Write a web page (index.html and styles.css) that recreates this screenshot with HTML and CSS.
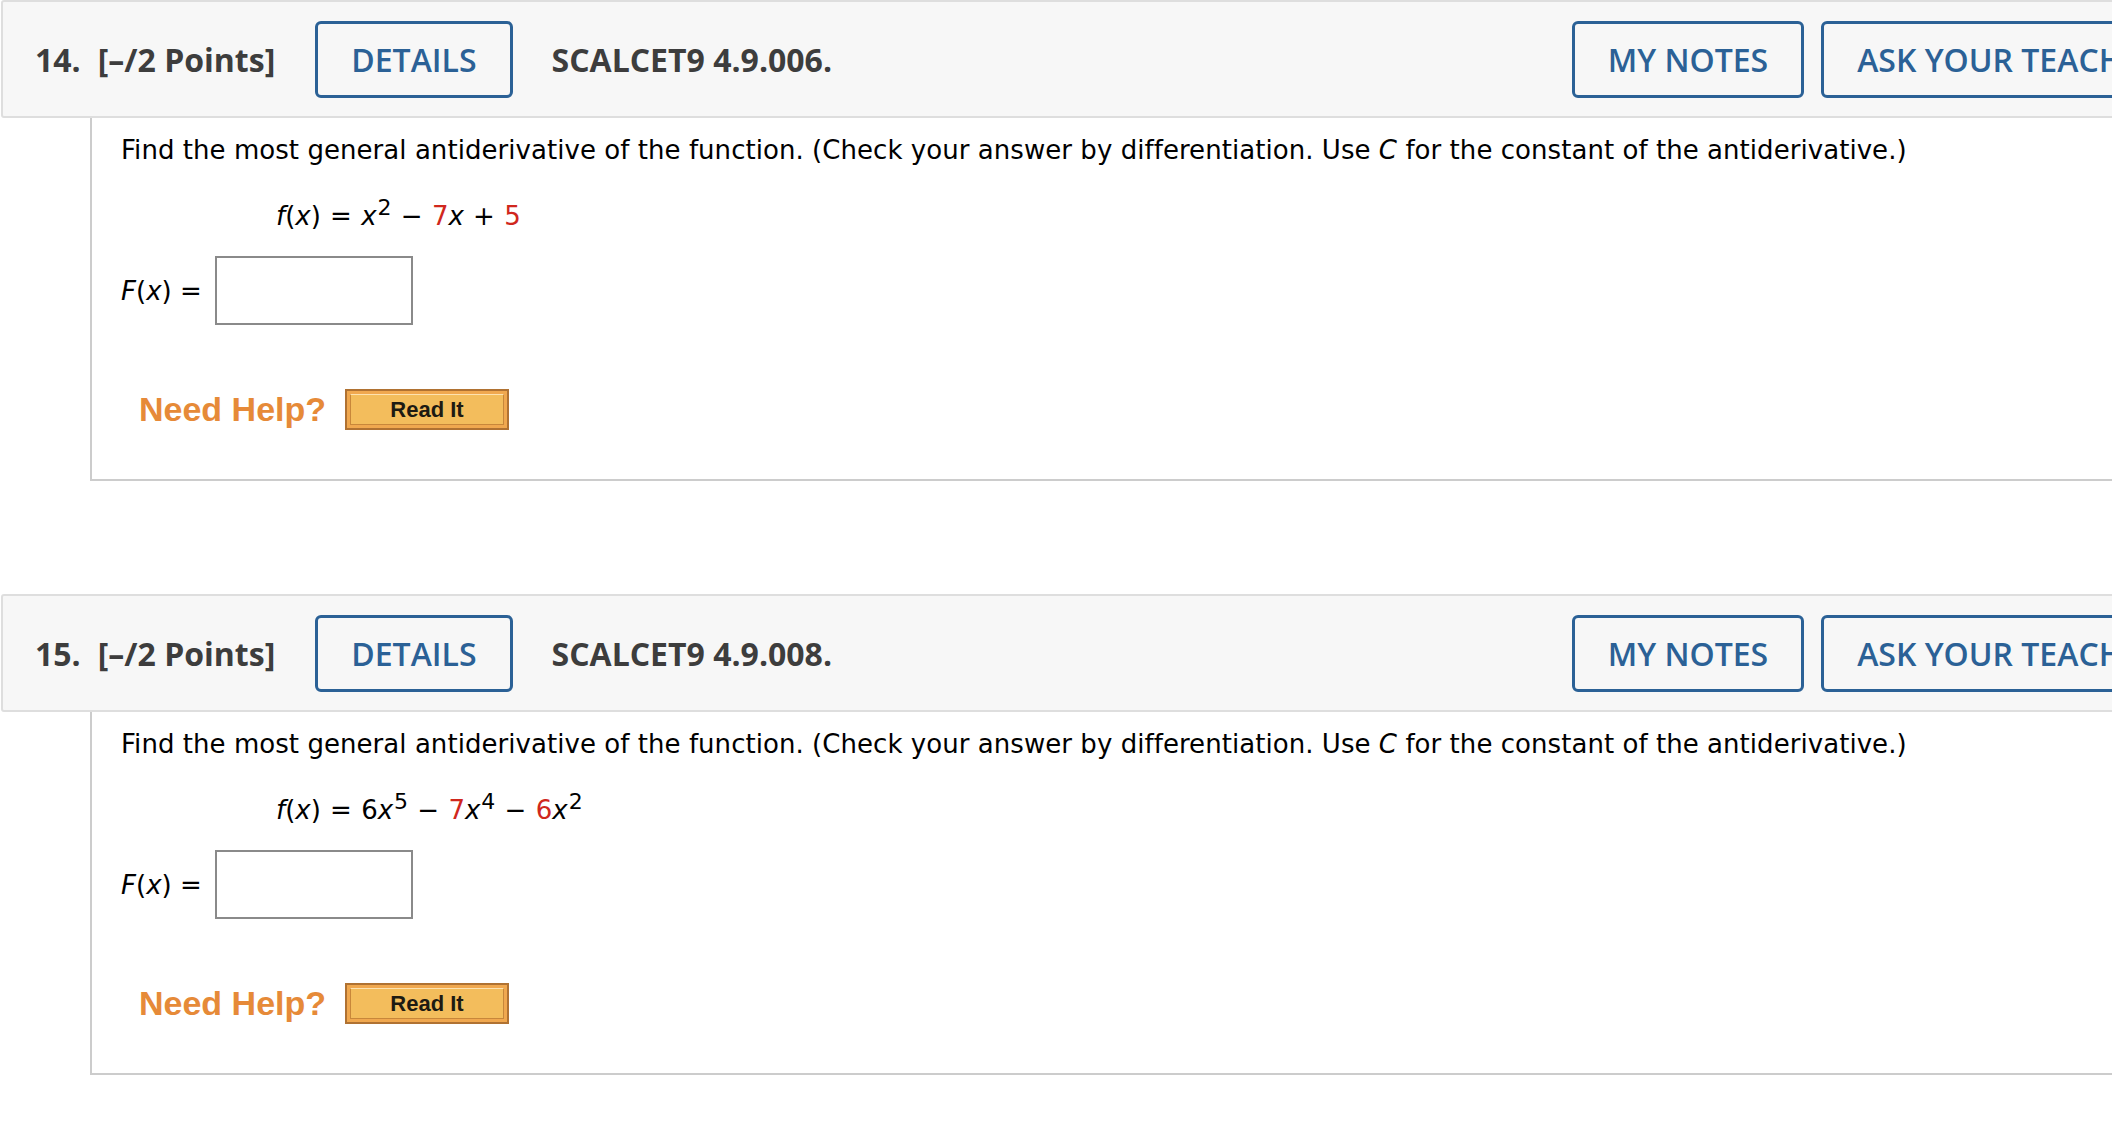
FILE: index.html
```html
<!DOCTYPE html>
<html lang="en">
<head>
    <meta charset="UTF-8">
    <title>SCALCET9 4.9 Antiderivatives</title>
    <link rel="stylesheet" href="styles.css">
</head>
<body>
    <div class="page">
        <div class="question">
            <div class="q-header">
                <span class="q-num">14.</span>
                <span class="q-points">[&ndash;/2 Points]</span>
                <button class="q-btn">DETAILS</button>
                <span class="q-code">SCALCET9 4.9.006.</span>
                <button class="q-btn q-notes">MY NOTES</button>
                <button class="q-btn q-ask">ASK YOUR TEACHER</button>
            </div>
            <div class="q-body">
                <p class="prompt">Find the most general antiderivative of the function. (Check your answer by differentiation. Use <i>C</i> for the constant of the antiderivative.)</p>
                <p class="formula"><i>f</i>(<i>x</i>) = <i>x</i><sup>2</sup> &minus; <span class="red">7</span><i>x</i> + <span class="red">5</span></p>
                <div class="answer">
                    <span class="answer-label"><i>F</i>(<i>x</i>) =</span>
                    <input type="text" class="answer-box">
                </div>
                <div class="help">
                    <span class="need-help">Need Help?</span>
                    <button class="read-it"><span>Read It</span></button>
                </div>
            </div>
        </div>

        <div class="question">
            <div class="q-header">
                <span class="q-num">15.</span>
                <span class="q-points">[&ndash;/2 Points]</span>
                <button class="q-btn">DETAILS</button>
                <span class="q-code">SCALCET9 4.9.008.</span>
                <button class="q-btn q-notes">MY NOTES</button>
                <button class="q-btn q-ask">ASK YOUR TEACHER</button>
            </div>
            <div class="q-body">
                <p class="prompt">Find the most general antiderivative of the function. (Check your answer by differentiation. Use <i>C</i> for the constant of the antiderivative.)</p>
                <p class="formula"><i>f</i>(<i>x</i>) = 6<i>x</i><sup>5</sup> &minus; <span class="red">7</span><i>x</i><sup>4</sup> &minus; <span class="red">6</span><i>x</i><sup>2</sup></p>
                <div class="answer">
                    <span class="answer-label"><i>F</i>(<i>x</i>) =</span>
                    <input type="text" class="answer-box">
                </div>
                <div class="help">
                    <span class="need-help">Need Help?</span>
                    <button class="read-it"><span>Read It</span></button>
                </div>
            </div>
        </div>
    </div>
</body>
</html>
```

FILE: styles.css
```css
body {
    margin: 0;
    background: #fff;
    overflow: hidden;
    font-family: "DejaVu Sans", Verdana, sans-serif;
}

.page {
    width: 2214px;
    padding-left: 1px;
}

.question {
    margin-bottom: 113px;
}

/* header bar */
.q-header {
    display: flex;
    align-items: center;
    height: 114px;
    background: #f7f7f7;
    border: 2px solid #dedede;
    border-radius: 3px;
    font-family: "Open Sans", sans-serif;
    font-weight: 700;
    font-size: 32px;
    color: #3d3d3d;
}

.q-num {
    margin-left: 32px;
}

.q-points {
    margin-left: 17px;
}

.q-btn {
    font-family: "Open Sans", sans-serif;
    font-weight: 600;
    font-size: 32px;
    color: #2b6196;
    background: transparent;
    border: 3px solid #2b6196;
    border-radius: 6px;
    height: 77px;
    padding: 0 33px;
    margin-left: 40px;
    cursor: pointer;
    white-space: nowrap;
}

.q-code {
    margin-left: 39px;
}

.q-notes {
    margin-left: auto;
}

.q-ask {
    flex-shrink: 0;
    margin-left: 17px;
    margin-right: 16px;
}

/* question body */
.q-body {
    margin-left: 89px;
    border-left: 2px solid #cccccc;
    border-bottom: 2px solid #cccccc;
    padding: 18px 0 49px 29px;
    color: #000;
    font-size: 26px;
}

.prompt {
    margin: 0;
    line-height: 29px;
    letter-spacing: 0.05px;
}

.formula {
    margin: 36px 0 0 155px;
    line-height: 30px;
    word-spacing: 1px;
}

.formula sup {
    font-size: 22px;
    line-height: 0;
    margin-left: 1px;
}

.red {
    color: #d0271d;
}

.answer {
    display: flex;
    align-items: center;
    margin-top: 25px;
}

.answer-label {
    width: 94px;
}

.answer-box {
    width: 198px;
    height: 69px;
    box-sizing: border-box;
    border: 2px solid #8a8a8a;
    border-radius: 0;
    background: #fff;
}

.help {
    display: flex;
    align-items: center;
    margin-top: 64px;
    padding-left: 18px;
}

.need-help {
    font-family: "Liberation Sans", Arial, sans-serif;
    font-weight: 700;
    font-size: 34px;
    color: #e68a38;
    width: 206px;
}

.read-it {
    width: 164px;
    height: 41px;
    padding: 3px;
    border: 2px solid #b07232;
    background: #f0a84f;
    cursor: pointer;
}

.read-it span {
    display: block;
    height: 100%;
    box-sizing: border-box;
    border: 1px solid #c8873a;
    border-top-color: #fde2b0;
    background: #f3bd5c;
    font-family: "Liberation Sans", Arial, sans-serif;
    font-weight: 700;
    font-size: 22px;
    line-height: 29px;
    color: #1d1a12;
}
```
